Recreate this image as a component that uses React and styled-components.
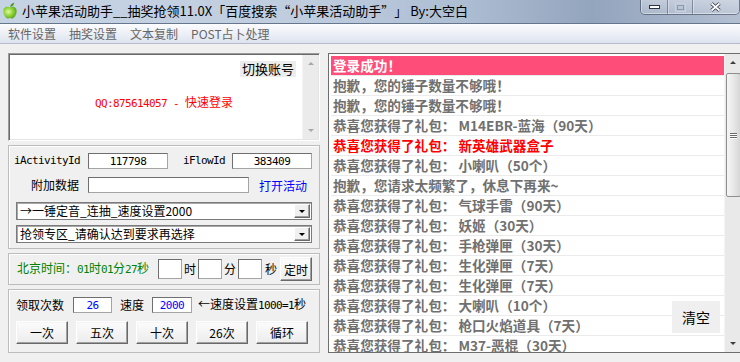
import React from 'react';
import styled, { createGlobalStyle } from 'styled-components';

const Global = createGlobalStyle`
  html, body { margin: 0; padding: 0; background: #f0f0f0; }
  body { width: 740px; height: 362px; overflow: hidden; font-family: "Noto Sans CJK SC", "Noto Sans", sans-serif; }
  * { box-sizing: border-box; }
`;

const Window = styled.div`
  width: 740px;
  height: 362px;
  display: flex;
  flex-direction: column;
  background: #f0f0f0;
  overflow: hidden;
`;

const TitleBar = styled.div`
  height: 24px;
  flex: none;
  display: flex;
  align-items: flex-start;
  background: linear-gradient(90deg, #c5d3e3 0%, #bfcddf 40%, #aebed3 62%, #93a4bd 80%, #a6b4c9 92%, #b4c0d2 100%);
  border-bottom: 1px solid #66768c;
`;

const AppIcon = styled.svg`
  margin: 2px 0 0 2px;
  flex: none;
`;

const TitleText = styled.div`
  margin: 2px 0 0 4px;
  font-size: 13px;
  line-height: 17px;
  color: #000;
  white-space: pre;
`;

const WinButtons = styled.div`
  margin-left: auto;
  display: flex;
  height: 15px;
  width: 100px;
  flex: none;
  border: 1px solid rgba(50, 60, 80, 0.55);
  border-top: none;
  border-radius: 0 0 5px 5px;
  overflow: hidden;
  box-shadow: inset 0 -1px 0 rgba(255, 255, 255, 0.45);
`;

const WinBtn = styled.div`
  width: ${p => p.$w}px;
  height: 100%;
  display: flex;
  align-items: center;
  justify-content: center;
  background: linear-gradient(rgba(255, 255, 255, 0.35), rgba(255, 255, 255, 0.12));
  border-left: ${p => (p.$first ? 'none' : '1px solid rgba(50, 60, 80, 0.45)')};
  box-shadow: inset 1px 0 0 rgba(255, 255, 255, 0.35);
`;

const MenuBar = styled.div`
  height: 20px;
  flex: none;
  display: flex;
  gap: 13px;
  padding-left: 8px;
  background: linear-gradient(#fbfcfe, #eef1f7 45%, #dde4ef);
  border-bottom: 1px solid #b4bccb;
`;

const MenuItem = styled.div`
  font-size: 12px;
  line-height: 19px;
  color: #666;
`;

const Main = styled.div`
  flex: 1;
  display: flex;
  gap: 8px;
  padding: 9px 0 0 8px;
  min-height: 0;
`;

const LeftCol = styled.div`
  width: 312px;
  flex: none;
  display: flex;
  flex-direction: column;
  gap: 4px;
`;

const LoginBox = styled.div`
  height: 88px;
  display: flex;
  background: #fff;
  border: 1px solid;
  border-color: #9a9a9a #fff #fff #9a9a9a;
  box-shadow: inset 1px 1px 0 #6a6a6a, inset -1px -1px 0 #e3e3e3;
  padding: 1px;
`;

const LoginContent = styled.div`
  flex: 1;
  display: flex;
  flex-direction: column;
  align-items: flex-end;
`;

const SwitchBtn = styled.div`
  margin: 6px 6px 0 0;
  width: 56px;
  height: 16px;
  background: #ececec;
  font-size: 13px;
  line-height: 16px;
  text-align: center;
  color: #000;
`;

const QQLine = styled.div`
  align-self: stretch;
  margin-top: 17px;
  padding-left: 16px;
  text-align: center;
  color: #ff0000;
  font-size: 12px;
  line-height: 16px;
  white-space: pre;
`;

const Lat = styled.span`
  font-family: "DejaVu Sans Mono", monospace;
  font-size: 11px;
  letter-spacing: -0.62px;
`;

const VScroll = styled.div`
  width: ${p => p.$w}px;
  flex: none;
  display: flex;
  flex-direction: column;
  background: ${p => p.$bg};
  border-left: 1px solid #f4f4f4;
`;

const ArrowCell = styled.div`
  height: 17px;
  flex: none;
  display: flex;
  align-items: center;
  justify-content: center;
`;

const Tri = styled.div`
  width: 0;
  height: 0;
  border-left: ${p => p.$s}px solid transparent;
  border-right: ${p => p.$s}px solid transparent;
  ${p => (p.$up ? `border-bottom: ${p.$s}px solid ${p.$c};` : `border-top: ${p.$s}px solid ${p.$c};`)}
`;

const Track = styled.div`
  flex: 1;
`;

const Thumb = styled.div`
  margin: 2px 0 0 1px;
  width: 15px;
  height: 124px;
  flex: none;
  border: 1px solid #8f8f8f;
  border-radius: 2px;
  background: linear-gradient(90deg, #f6f6f6, #e6e6e6 55%, #d6d6d6);
  display: flex;
  flex-direction: column;
  align-items: center;
  justify-content: center;
  gap: 1px;
`;

const Grip = styled.div`
  width: 7px;
  height: 1px;
  background: #6a6a6a;
  box-shadow: 0 1px 0 #fff;
`;

const Group = styled.div`
  height: ${p => p.$h}px;
  flex: none;
  border: 1px solid #bcbcbc;
  box-shadow: inset 1px 1px 0 #fff;
  padding: ${p => p.$pad};
  display: flex;
  flex-direction: column;
  justify-content: ${p => p.$justify || 'flex-start'};
`;

const Row = styled.div`
  display: flex;
  align-items: center;
  height: ${p => p.$h}px;
  margin-top: ${p => p.$mt || 0}px;
  flex: none;
`;

const Label = styled.div`
  width: ${p => (p.$w ? `${p.$w}px` : 'auto')};
  margin-left: ${p => p.$ml || 0}px;
  flex: none;
  font-size: 12px;
  line-height: 16px;
  color: ${p => p.$color || '#000'};
  text-align: ${p => p.$align || 'left'};
  padding-right: ${p => p.$pr || 0}px;
  white-space: pre;
`;

const MonoLabel = styled(Label)`
  font-family: "DejaVu Sans Mono", monospace;
  font-size: 11px;
  letter-spacing: -0.62px;
`;

const Field = styled.input`
  width: ${p => p.$w}px;
  height: ${p => p.$h || 16}px;
  flex: none;
  margin: 0;
  padding: 0;
  background: #fff;
  border: 1px solid #a4a4a4;
  border-top-color: #6f6f6f;
  border-left-color: #6f6f6f;
  outline: none;
  text-align: center;
  color: ${p => p.$color || '#000'};
  font-family: "DejaVu Sans Mono", monospace;
  font-size: 11px;
  letter-spacing: -0.5px;
`;

const Select = styled.div`
  width: 296px;
  height: 18px;
  margin-left: 2px;
  flex: none;
  display: flex;
  align-items: center;
  background: #fff;
  border: 1px solid #7a7a7a;
  box-shadow: inset 1px 1px 0 #a8a8a8;
  padding: 1px;
`;

const SelectText = styled.div`
  flex: 1;
  padding-left: 2px;
  font-size: 12px;
  line-height: 14px;
  color: #000;
  white-space: pre;
`;

const DropBtn = styled.div`
  width: 16px;
  height: 14px;
  flex: none;
  display: flex;
  align-items: center;
  justify-content: center;
  background: #f0f0f0;
  border: 1px solid;
  border-color: #fff #696969 #696969 #fff;
  box-shadow: inset -1px -1px 0 #a0a0a0;
`;

const Link = styled.div`
  margin-left: 10px;
  font-size: 12px;
  color: #0000ff;
`;

const Btn = styled.button`
  width: ${p => p.$w}px;
  height: ${p => p.$h}px;
  flex: none;
  margin: 0;
  padding: 0;
  font-family: "Noto Sans CJK SC", sans-serif;
  font-size: 12px;
  color: #000;
  background: linear-gradient(#fcfcfc, #ececec);
  border: 1px solid;
  border-color: #fff #696969 #696969 #fff;
  box-shadow: inset -1px -1px 0 #a0a0a0, inset 1px 1px 0 #f4f4f4;
`;

const BtnRow = styled.div`
  display: flex;
  gap: 8px;
  margin-top: 8px;
`;

const ListBox = styled.div`
  position: relative;
  width: 413px;
  height: 300px;
  flex: none;
  display: flex;
  background: #fff;
  border: 1px solid #6e6e6e;
  border-right: none;
`;

const Rows = styled.div`
  flex: 1;
  padding: 2px 0 0 2px;
  overflow: hidden;
`;

const Item = styled.div`
  height: 20px;
  padding-left: 2px;
  border-bottom: 1px solid #ebebeb;
  background: ${p => (p.$kind === 'ok' ? '#ff4d7a' : '#fff')};
  color: ${p => (p.$kind === 'ok' ? '#fff' : p.$kind === 'red' ? '#ff0000' : '#707070')};
  font-size: 13.6px;
  font-weight: 700;
  line-height: 19px;
  white-space: pre;
`;

const Punct = styled.span`
  display: inline-block;
  width: 1em;
  text-align: ${p => p.$align};
`;

const ClearBtn = styled.div`
  position: absolute;
  left: 343px;
  top: 247px;
  width: 48px;
  height: 32px;
  background: #efefef;
  font-size: 14px;
  line-height: 32px;
  text-align: center;
  color: #000;
`;

const OPEN = '（“「';
const FULL = '（），！：“”「」';

function Wide({ text }) {
  const parts = [];
  let buf = '';
  [...text].forEach((ch, i) => {
    if (FULL.includes(ch)) {
      if (buf) parts.push(buf);
      buf = '';
      const align = OPEN.includes(ch) ? 'right' : ch === '！' ? 'center' : 'left';
      parts.push(
        <Punct key={i} $align={align}>
          {ch}
        </Punct>
      );
    } else {
      buf += ch;
    }
  });
  if (buf) parts.push(buf);
  return <>{parts}</>;
}

const menus = ['软件设置', '抽奖设置', '文本复制', 'POST占卜处理'];

const rows = [
  { t: '登录成功！', kind: 'ok' },
  { t: '抱歉，您的锤子数量不够哦！' },
  { t: '抱歉，您的锤子数量不够哦！' },
  { t: '恭喜您获得了礼包： M14EBR-蓝海（90天）' },
  { t: '恭喜您获得了礼包： 新英雄武器盒子', kind: 'red' },
  { t: '恭喜您获得了礼包： 小喇叭（50个）' },
  { t: '抱歉，您请求太频繁了，休息下再来~' },
  { t: '恭喜您获得了礼包： 气球手雷（90天）' },
  { t: '恭喜您获得了礼包： 妖姬（30天）' },
  { t: '恭喜您获得了礼包： 手枪弹匣（30天）' },
  { t: '恭喜您获得了礼包： 生化弹匣（7天）' },
  { t: '恭喜您获得了礼包： 生化弹匣（7天）' },
  { t: '恭喜您获得了礼包： 大喇叭（10个）' },
  { t: '恭喜您获得了礼包： 枪口火焰道具（7天）' },
  { t: '恭喜您获得了礼包： M37-恶棍（30天）' },
];

const counts = ['一次', '五次', '十次', '26次', '循环'];

export default function App() {
  return (
    <>
      <Global />
      <Window>
        <TitleBar>
          <AppIcon width="16" height="17" viewBox="0 0 16 17">
            <defs>
              <radialGradient id="apg" cx="0.38" cy="0.42" r="0.7">
                <stop offset="0" stopColor="#e2f8a8" />
                <stop offset="0.45" stopColor="#95d83e" />
                <stop offset="1" stopColor="#4f9c14" />
              </radialGradient>
            </defs>
            <path d="M8 5.6C6 4.2 1.4 4.3 1.4 9.2 1.4 13.2 4.4 16.6 6 16.6 7 16.6 7.2 16.1 8 16.1 8.8 16.1 9 16.6 10 16.6 11.6 16.6 14.6 13.2 14.6 9.2 14.6 4.3 10 4.2 8 5.6Z" fill="url(#apg)" />
            <path d="M8.3 5C8.3 2.6 10 1 12.2 0.8 12 3 10.6 4.6 8.3 5Z" fill="#4a9a16" />
          </AppIcon>
          <TitleText>
            小苹果活动助手__抽奖抢领11.0X
            <Wide text="「百度搜索“小苹果活动助手”」" /> By:大空白
          </TitleText>
          <WinButtons>
            <WinBtn $w={27} $first>
              <svg width="11" height="4" viewBox="0 0 11 4">
                <rect x="0.5" y="0.5" width="10" height="3" fill="#fff" stroke="#2c3444" />
              </svg>
            </WinBtn>
            <WinBtn $w={25}>
              <svg width="11" height="9" viewBox="0 0 11 9">
                <rect x="0.5" y="0.5" width="10" height="8" fill="none" stroke="#c9d1dd" />
                <rect x="2.5" y="2.5" width="6" height="4" fill="none" stroke="#8d99ab" />
              </svg>
            </WinBtn>
            <WinBtn $w={48}>
              <svg width="11" height="10" viewBox="0 0 11 10">
                <path d="M1.5 1.5L9.5 8.5M9.5 1.5L1.5 8.5" stroke="#2c3444" strokeWidth="3.4" />
                <path d="M1.5 1.5L9.5 8.5M9.5 1.5L1.5 8.5" stroke="#fff" strokeWidth="1.8" />
              </svg>
            </WinBtn>
          </WinButtons>
        </TitleBar>

        <MenuBar>
          {menus.map(m => (
            <MenuItem key={m}>{m}</MenuItem>
          ))}
        </MenuBar>

        <Main>
          <LeftCol>
            <LoginBox>
              <LoginContent>
                <SwitchBtn>切换账号</SwitchBtn>
                <QQLine>
                  <Lat>QQ:875614057 - </Lat>快速登录
                </QQLine>
              </LoginContent>
              <VScroll $w={16} $bg="#ebebeb">
                <ArrowCell>
                  <Tri $up $s={3} $c="#a8a8a8" />
                </ArrowCell>
                <Track />
                <ArrowCell>
                  <Tri $s={3} $c="#a8a8a8" />
                </ArrowCell>
              </VScroll>
            </LoginBox>

            <Group $h={104} $pad="7px 0 0 5px">
              <Row $h={16}>
                <MonoLabel $w={74}>iActivityId</MonoLabel>
                <Field $w={80} readOnly value="117798" />
                <MonoLabel $w={49} $ml={15}>iFlowId</MonoLabel>
                <Field $w={80} readOnly value="383409" />
              </Row>
              <Row $h={16} $mt={8}>
                <Label $w={74} $align="right" $pr={9}>附加数据</Label>
                <Field $w={161} readOnly value="" />
                <Link>打开活动</Link>
              </Row>
              <Row $h={18} $mt={9}>
                <Select>
                  <SelectText>→一锤定音_连抽_速度设置2000</SelectText>
                  <DropBtn>
                    <Tri $s={3} $c="#000" />
                  </DropBtn>
                </Select>
              </Row>
              <Row $h={18} $mt={5}>
                <Select>
                  <SelectText>抢领专区_请确认达到要求再选择</SelectText>
                  <DropBtn>
                    <Tri $s={3} $c="#000" />
                  </DropBtn>
                </Select>
              </Row>
            </Group>

            <Group $h={32} $pad="0 0 0 8px" $justify="center">
              <Row $h={24}>
                <Label $w={141} $color="#008000">
                  北京时间<Wide text="：" /><Lat>01</Lat>时<Lat>01</Lat>分<Lat>27</Lat>秒
                </Label>
                <Field $w={24} $h={20} readOnly value="" />
                <Label $w={16} $align="center">时</Label>
                <Field $w={24} $h={20} readOnly value="" />
                <Label $w={16} $align="center">分</Label>
                <Field $w={24} $h={20} readOnly value="" />
                <Label $w={18} $align="center">秒</Label>
                <Btn $w={32} $h={24}>定时</Btn>
              </Row>
            </Group>

            <Group $h={64} $pad="7px 0 0 7px">
              <Row $h={16}>
                <Label $w={57}>领取次数</Label>
                <Field $w={39} $color="#0000ff" readOnly value="26" />
                <Label $w={32} $ml={8}>速度</Label>
                <Field $w={40} $color="#0000ff" readOnly value="2000" />
                <Label $ml={6}>
                  ←速度设置<Lat>1000=1</Lat>秒
                </Label>
              </Row>
              <BtnRow>
                {counts.map(c => (
                  <Btn key={c} $w={52} $h={23}>{c}</Btn>
                ))}
              </BtnRow>
            </Group>
          </LeftCol>

          <ListBox>
            <Rows>
              {rows.map((r, i) => (
                <Item key={i} $kind={r.kind}>
                  <Wide text={r.t} />
                </Item>
              ))}
            </Rows>
            <VScroll $w={17} $bg="#e9e9e9">
              <ArrowCell>
                <Tri $up $s={3} $c="#3d3d3d" />
              </ArrowCell>
              <Thumb>
                <Grip />
                <Grip />
                <Grip />
              </Thumb>
              <Track />
              <ArrowCell>
                <Tri $s={3} $c="#3d3d3d" />
              </ArrowCell>
            </VScroll>
            <ClearBtn>清空</ClearBtn>
          </ListBox>
        </Main>
      </Window>
    </>
  );
}
